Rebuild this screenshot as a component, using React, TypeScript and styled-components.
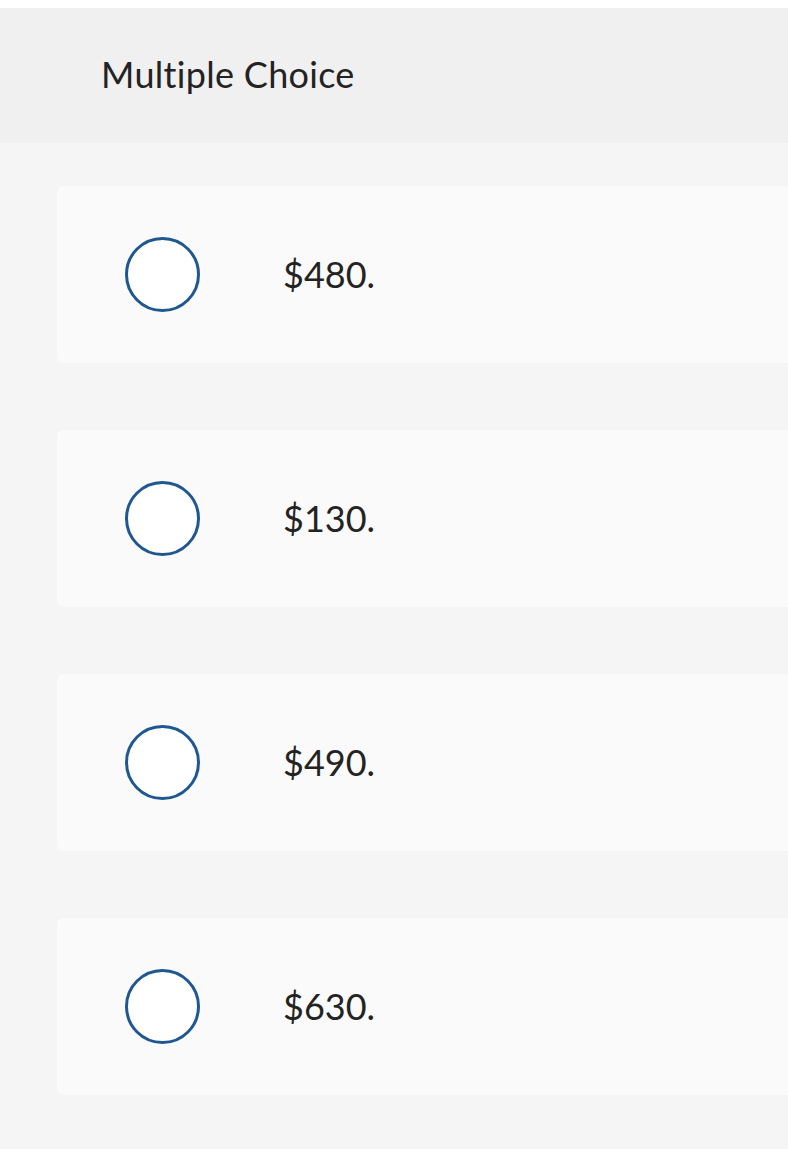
import React from "react";
import styled, { createGlobalStyle } from "styled-components";

const Global = createGlobalStyle`
  html, body { margin: 0; padding: 0; background: #f5f5f5; }
  body { font-family: "Lato", "Noto Sans", sans-serif; color: #222; }
`;

const Page = styled.div`
  padding-top: 8px;
  background: #ffffff;
  overflow: hidden;
  min-height: 1149px;
  box-sizing: border-box;
`;

const Header = styled.header`
  background: #f0f0f0;
  height: 135px;
  display: flex;
  align-items: center;
  padding-left: 101px;
  padding-bottom: 4px;
  box-sizing: border-box;
`;

const Title = styled.h1`
  margin: 0;
  font-size: 36px;
  font-weight: 400;
  color: #232323;
  letter-spacing: 0.3px;
`;

const Body = styled.main`
  background: #f5f5f5;
  padding: 43px 0 60px 57px;
  display: flex;
  flex-direction: column;
  gap: 67px;
`;

const Option = styled.label`
  background: #fafafa;
  border-radius: 6px;
  height: 177px;
  margin-right: -40px;
  display: flex;
  align-items: center;
  padding-left: 68px;
  gap: 83px;
  cursor: pointer;
`;

const Radio = styled.span`
  width: 75px;
  height: 75px;
  box-sizing: border-box;
  border-radius: 50%;
  border: 3px solid #1f5891;
  background: #fff;
  flex: none;
`;

const Answer = styled.span`
  font-size: 36px;
  color: #232323;
  margin-top: -2px;
`;

const options = ["$480.", "$130.", "$490.", "$630."];

export default function App() {
  return (
    <>
      <Global />
      <Page>
        <Header>
          <Title>Multiple Choice</Title>
        </Header>
        <Body>
          {options.map((o) => (
            <Option key={o}>
              <Radio />
              <Answer>{o}</Answer>
            </Option>
          ))}
        </Body>
      </Page>
    </>
  );
}
